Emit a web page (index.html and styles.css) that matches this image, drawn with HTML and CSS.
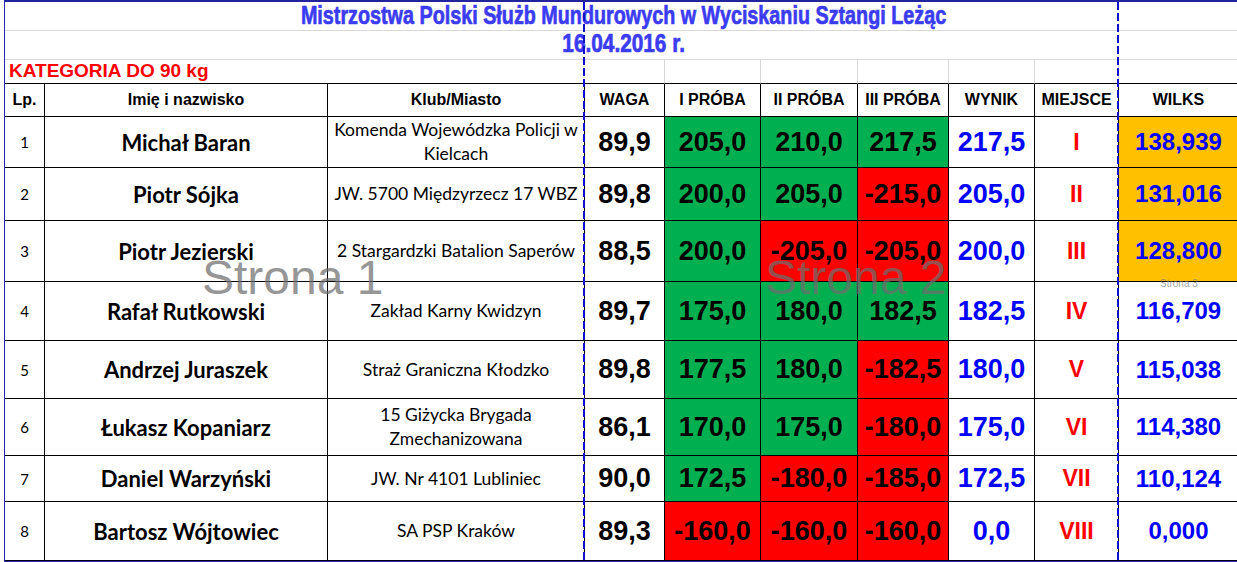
FILE: index.html
```html
<!DOCTYPE html>
<html lang="pl">
<head>
<meta charset="utf-8">
<title>Mistrzostwa Polski Służb Mundurowych</title>
<link rel="stylesheet" href="styles.css">
</head>
<body>
<div class="sheet">
  <div class="grid">
    <div class="title"><span class="cond">Mistrzostwa Polski Służb Mundurowych w Wyciskaniu Sztangi Leżąc</span></div>
    <div class="title date"><span class="cond">16.04.2016 r.</span></div>
    <div class="kat">KATEGORIA DO 90 kg</div>
    <div class="kc"></div><div class="kc"></div><div class="kc"></div><div class="kc"></div><div class="kc"></div><div class="kc"></div><div class="kc last"></div>

    <div class="h">Lp.</div><div class="h">Imię i nazwisko</div><div class="h">Klub/Miasto</div><div class="h">WAGA</div><div class="h">I PRÓBA</div><div class="h">II PRÓBA</div><div class="h">III PRÓBA</div><div class="h">WYNIK</div><div class="h">MIEJSCE</div><div class="h">WILKS</div>

    <div class="c lp">1</div><div class="c nm">Michał Baran</div><div class="c kl">Komenda Wojewódzka Policji w<br>Kielcach</div><div class="c wg">89,9</div><div class="c tr ok">205,0</div><div class="c tr ok">210,0</div><div class="c tr ok">217,5</div><div class="c wy">217,5</div><div class="c mj">I</div><div class="c wk gold">138,939</div>

    <div class="c lp">2</div><div class="c nm">Piotr Sójka</div><div class="c kl">JW. 5700 Międzyrzecz 17 WBZ</div><div class="c wg">89,8</div><div class="c tr ok">200,0</div><div class="c tr ok">205,0</div><div class="c tr no">-215,0</div><div class="c wy">205,0</div><div class="c mj">II</div><div class="c wk gold">131,016</div>

    <div class="c lp">3</div><div class="c nm">Piotr Jezierski</div><div class="c kl">2 Stargardzki Batalion Saperów</div><div class="c wg">88,5</div><div class="c tr ok">200,0</div><div class="c tr no">-205,0</div><div class="c tr no">-205,0</div><div class="c wy">200,0</div><div class="c mj">III</div><div class="c wk gold">128,800</div>

    <div class="c lp">4</div><div class="c nm">Rafał Rutkowski</div><div class="c kl">Zakład Karny Kwidzyn</div><div class="c wg">89,7</div><div class="c tr ok">175,0</div><div class="c tr ok">180,0</div><div class="c tr ok">182,5</div><div class="c wy">182,5</div><div class="c mj">IV</div><div class="c wk">116,709</div>

    <div class="c lp">5</div><div class="c nm">Andrzej Juraszek</div><div class="c kl">Straż Graniczna Kłodzko</div><div class="c wg">89,8</div><div class="c tr ok">177,5</div><div class="c tr ok">180,0</div><div class="c tr no">-182,5</div><div class="c wy">180,0</div><div class="c mj">V</div><div class="c wk">115,038</div>

    <div class="c lp">6</div><div class="c nm">Łukasz Kopaniarz</div><div class="c kl">15 Giżycka Brygada<br>Zmechanizowana</div><div class="c wg">86,1</div><div class="c tr ok">170,0</div><div class="c tr ok">175,0</div><div class="c tr no">-180,0</div><div class="c wy">175,0</div><div class="c mj">VI</div><div class="c wk">114,380</div>

    <div class="c lp">7</div><div class="c nm">Daniel Warzyński</div><div class="c kl">JW. Nr 4101 Lubliniec</div><div class="c wg">90,0</div><div class="c tr ok">172,5</div><div class="c tr no">-180,0</div><div class="c tr no">-185,0</div><div class="c wy">172,5</div><div class="c mj">VII</div><div class="c wk">110,124</div>

    <div class="c lp">8</div><div class="c nm">Bartosz Wójtowiec</div><div class="c kl">SA PSP Kraków</div><div class="c wg">89,3</div><div class="c tr no">-160,0</div><div class="c tr no">-160,0</div><div class="c tr no">-160,0</div><div class="c wy">0,0</div><div class="c mj">VIII</div><div class="c wk">0,000</div>
  </div>

  <div class="pb pb1"></div>
  <div class="pb pb2"></div>
  <div class="wm wm1">Strona 1</div>
  <div class="wm wm2">Strona 2</div>
  <div class="wm3">Strona 3</div>
</div>
</body>
</html>
```

FILE: styles.css
```css
html, body {
  margin: 0;
  padding: 0;
  background: #ffffff;
  overflow: hidden;
}

body {
  width: 1237px;
  height: 562px;
  font-family: "Liberation Sans", Arial, sans-serif;
}

.sheet {
  position: relative;
  margin: 0 0 0 4px;
  width: 1240px;
  border-top: 2px solid #23239e;
  border-left: 1px solid #2a2ab4;
}

.grid {
  display: grid;
  grid-template-columns: 40px 283px 257px 80px 96px 97px 91px 86px 84px 120px;
  grid-template-rows: 29px 29px 24px 33px 51px 53px 61px 59px 58px 57px 46px 59px;
  border-bottom: 2px solid #2a2ab4;
}

.grid > div {
  box-sizing: border-box;
}

.title {
  grid-column: 1 / -1;
  border-bottom: 1px solid #d9d9d9;
  display: flex;
  align-items: flex-start;
  justify-content: center;
  color: #3b3bf2;
  font-weight: bold;
  font-size: 26px;
  line-height: 1;
  padding-left: 4px;
}

.cond {
  display: inline-block;
  transform: scaleX(0.76);
  white-space: nowrap;
  -webkit-text-stroke: 0.7px #3b3bf2;
}

.date .cond {
  transform: translateY(-1px) scaleX(0.8);
}

.kat {
  grid-column: 1 / 4;
  border-bottom: 1px solid #000;
  color: #ff0000;
  font-weight: bold;
  font-size: 19px;
  display: flex;
  align-items: flex-end;
  padding: 0 0 1px 4px;
}

.kc {
  border-right: 1px solid #d9d9d9;
  border-bottom: 1px solid #000;
}

.kc.last {
  border-right: none;
}

.h {
  border-right: 1px solid #000;
  border-bottom: 1px solid #000;
  display: flex;
  align-items: center;
  justify-content: center;
  font-weight: bold;
  font-size: 16px;
  color: #000;
}

.c {
  border-right: 1px solid #000;
  border-bottom: 1px solid #000;
  display: flex;
  align-items: center;
  justify-content: center;
  text-align: center;
  color: #000;
}

.lp {
  font-family: Lato, "Liberation Sans", sans-serif;
  font-size: 15px;
}

.nm {
  font-family: Lato, "Liberation Sans", sans-serif;
  font-weight: bold;
  font-size: 22px;
}

.kl {
  font-family: Lato, "Liberation Sans", sans-serif;
  font-size: 17.5px;
  line-height: 24px;
}

.wg, .tr, .wy {
  font-weight: bold;
  font-size: 27px;
}

.wy {
  color: #0000ff;
}

.mj {
  color: #ff0000;
  font-weight: bold;
  font-size: 23px;
}

.wk {
  color: #0000ff;
  font-weight: bold;
  font-size: 24px;
}

.ok {
  background: #00b050;
}

.no {
  background: #ff0000;
}

.gold {
  background: #ffc000;
}

.pb {
  position: absolute;
  top: 0;
  width: 2px;
  height: 562px;
  background: repeating-linear-gradient(to bottom, #1010c8 0 8px, transparent 8px 11px);
}

.pb1 {
  left: 578px;
}

.pb2 {
  left: 1112px;
}

.wm {
  position: absolute;
  color: rgba(110, 110, 110, 0.72);
  font-size: 48px;
  line-height: 1;
  white-space: nowrap;
}

.wm1 {
  left: 197px;
  top: 252px;
}

.wm2 {
  left: 760px;
  top: 252px;
}

.wm3 {
  position: absolute;
  left: 1155px;
  top: 276px;
  font-size: 10px;
  color: rgba(120, 120, 120, 0.7);
}
```
